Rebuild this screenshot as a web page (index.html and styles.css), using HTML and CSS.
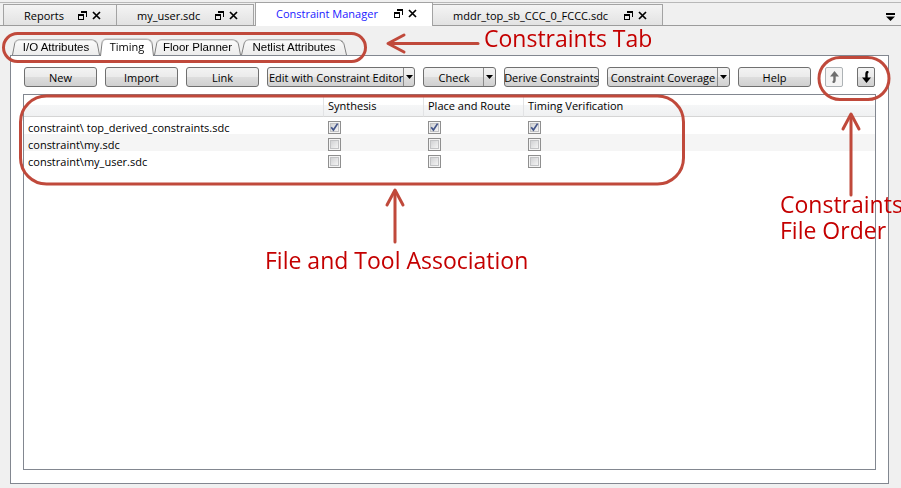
FILE: index.html
```html
<!DOCTYPE html>
<html>
<head>
<meta charset="utf-8">
<title>Constraint Manager</title>
<link rel="stylesheet" href="styles.css">
</head>
<body>
<svg class="defs" width="0" height="0">
  <defs>
    <linearGradient id="cbfill" x1="0" y1="0" x2="1" y2="1">
      <stop offset="0" stop-color="#cfd0d2"/>
      <stop offset="1" stop-color="#f6f6f6"/>
    </linearGradient>
  </defs>
</svg>

<div class="doctabs">
  <div class="dtab dtab-first w-reports"><span class="dlabel">Reports</span><span class="dicons"><svg class="ico-restore" width="9" height="9" viewBox="0 0 9 9"><path d="M3 0.5h5.5v5.5" fill="none" stroke="#000" stroke-width="1"/><rect x="3" y="0" width="6" height="2" fill="#000"/><rect x="0.5" y="3.5" width="5" height="5" fill="none" stroke="#000"/><rect x="0" y="3" width="6" height="2" fill="#000"/></svg><svg class="ico-close" width="9" height="9" viewBox="0 0 9 9"><path d="M1 1L8 8M8 1L1 8" stroke="#000" stroke-width="1.7"/></svg></span></div>
  <div class="dtab w-user"><span class="dlabel">my_user.sdc</span><span class="dicons"><svg class="ico-restore" width="9" height="9" viewBox="0 0 9 9"><path d="M3 0.5h5.5v5.5" fill="none" stroke="#000" stroke-width="1"/><rect x="3" y="0" width="6" height="2" fill="#000"/><rect x="0.5" y="3.5" width="5" height="5" fill="none" stroke="#000"/><rect x="0" y="3" width="6" height="2" fill="#000"/></svg><svg class="ico-close" width="9" height="9" viewBox="0 0 9 9"><path d="M1 1L8 8M8 1L1 8" stroke="#000" stroke-width="1.7"/></svg></span></div>
  <div class="dtab dtab-active w-cm"><span class="dlabel">Constraint Manager</span><span class="dicons"><svg class="ico-restore" width="9" height="9" viewBox="0 0 9 9"><path d="M3 0.5h5.5v5.5" fill="none" stroke="#000" stroke-width="1"/><rect x="3" y="0" width="6" height="2" fill="#000"/><rect x="0.5" y="3.5" width="5" height="5" fill="none" stroke="#000"/><rect x="0" y="3" width="6" height="2" fill="#000"/></svg><svg class="ico-close" width="9" height="9" viewBox="0 0 9 9"><path d="M1 1L8 8M8 1L1 8" stroke="#000" stroke-width="1.7"/></svg></span></div>
  <div class="dtab w-mddr"><span class="dlabel">mddr_top_sb_CCC_0_FCCC.sdc</span><span class="dicons"><svg class="ico-restore" width="9" height="9" viewBox="0 0 9 9"><path d="M3 0.5h5.5v5.5" fill="none" stroke="#000" stroke-width="1"/><rect x="3" y="0" width="6" height="2" fill="#000"/><rect x="0.5" y="3.5" width="5" height="5" fill="none" stroke="#000"/><rect x="0" y="3" width="6" height="2" fill="#000"/></svg><svg class="ico-close" width="9" height="9" viewBox="0 0 9 9"><path d="M1 1L8 8M8 1L1 8" stroke="#000" stroke-width="1.7"/></svg></span></div>
  <svg class="ico-menu" width="9" height="8" viewBox="0 0 9 8"><rect x="0" y="0" width="9" height="2" fill="#000"/><path d="M0 3.5H9L4.5 8Z" fill="#000"/></svg>
</div>

<div class="subtabs">
  <div class="stab w-io"><span>I/O Attributes</span></div>
  <div class="stab stab-active w-timing"><span>Timing</span></div>
  <div class="stab w-floor"><span>Floor Planner</span></div>
  <div class="stab w-netlist"><span>Netlist Attributes</span></div>
</div>

<div class="panel">
  <div class="toolbar">
    <button class="btn w73">New</button>
    <button class="btn w73">Import</button>
    <button class="btn w73">Link</button>
    <div class="combo w148"><span class="combo-main">Edit with Constraint Editor</span><span class="combo-drop"><svg width="7" height="4" viewBox="0 0 7 4"><path d="M0 0H7L3.5 4Z" fill="#000"/></svg></span></div>
    <div class="combo w73"><span class="combo-main">Check</span><span class="combo-drop"><svg width="7" height="4" viewBox="0 0 7 4"><path d="M0 0H7L3.5 4Z" fill="#000"/></svg></span></div>
    <button class="btn w95">Derive Constraints</button>
    <div class="combo w123"><span class="combo-main">Constraint Coverage</span><span class="combo-drop"><svg width="7" height="4" viewBox="0 0 7 4"><path d="M0 0H7L3.5 4Z" fill="#000"/></svg></span></div>
    <button class="btn w73">Help</button>
    <button class="abtn abtn-disabled up"><svg width="9" height="12" viewBox="0 0 9 12"><path d="M4.5 0L9 5.5H0Z" fill="#6e6e6e"/><path d="M4.5 5V9.2Q4.5 11 2.6 11.2" fill="none" stroke="#6e6e6e" stroke-width="2.4"/></svg></button>
    <button class="abtn"><svg width="9" height="12" viewBox="0 0 9 12"><path d="M4.5 12L9 6.5H0Z" fill="#000"/><path d="M4.5 7V2.8Q4.5 1 6.4 0.8" fill="none" stroke="#000" stroke-width="2.4"/></svg></button>
  </div>

  <div class="listbox">
    <div class="grid">
      <div class="hcell"></div>
      <div class="hcell">Synthesis</div>
      <div class="hcell">Place and Route</div>
      <div class="hcell hcell-last">Timing Verification</div>

      <div class="cell">constraint\ top_derived_constraints.sdc</div>
      <div class="cell"><svg class="cb" width="13" height="13" viewBox="0 0 13 13"><rect x="0.5" y="0.5" width="12" height="12" fill="#f4f4f4" stroke="#8f8f8f"/><rect x="2.5" y="2.5" width="8" height="8" fill="url(#cbfill)" stroke="#c2c3c5"/><path d="M3.2 6.2L5.4 9L9.6 2.6" fill="none" stroke="#43558a" stroke-width="1.7"/></svg></div>
      <div class="cell"><svg class="cb" width="13" height="13" viewBox="0 0 13 13"><rect x="0.5" y="0.5" width="12" height="12" fill="#f4f4f4" stroke="#8f8f8f"/><rect x="2.5" y="2.5" width="8" height="8" fill="url(#cbfill)" stroke="#c2c3c5"/><path d="M3.2 6.2L5.4 9L9.6 2.6" fill="none" stroke="#43558a" stroke-width="1.7"/></svg></div>
      <div class="cell cell-last"><svg class="cb" width="13" height="13" viewBox="0 0 13 13"><rect x="0.5" y="0.5" width="12" height="12" fill="#f4f4f4" stroke="#8f8f8f"/><rect x="2.5" y="2.5" width="8" height="8" fill="url(#cbfill)" stroke="#c2c3c5"/><path d="M3.2 6.2L5.4 9L9.6 2.6" fill="none" stroke="#43558a" stroke-width="1.7"/></svg></div>

      <div class="cell alt">constraint\my.sdc</div>
      <div class="cell alt"><svg class="cb" width="13" height="13" viewBox="0 0 13 13"><rect x="0.5" y="0.5" width="12" height="12" fill="#f4f4f4" stroke="#8f8f8f"/><rect x="2.5" y="2.5" width="8" height="8" fill="url(#cbfill)" stroke="#c2c3c5"/></svg></div>
      <div class="cell alt"><svg class="cb" width="13" height="13" viewBox="0 0 13 13"><rect x="0.5" y="0.5" width="12" height="12" fill="#f4f4f4" stroke="#8f8f8f"/><rect x="2.5" y="2.5" width="8" height="8" fill="url(#cbfill)" stroke="#c2c3c5"/></svg></div>
      <div class="cell alt cell-last"><svg class="cb" width="13" height="13" viewBox="0 0 13 13"><rect x="0.5" y="0.5" width="12" height="12" fill="#f4f4f4" stroke="#8f8f8f"/><rect x="2.5" y="2.5" width="8" height="8" fill="url(#cbfill)" stroke="#c2c3c5"/></svg></div>

      <div class="cell">constraint\my_user.sdc</div>
      <div class="cell"><svg class="cb" width="13" height="13" viewBox="0 0 13 13"><rect x="0.5" y="0.5" width="12" height="12" fill="#f4f4f4" stroke="#8f8f8f"/><rect x="2.5" y="2.5" width="8" height="8" fill="url(#cbfill)" stroke="#c2c3c5"/></svg></div>
      <div class="cell"><svg class="cb" width="13" height="13" viewBox="0 0 13 13"><rect x="0.5" y="0.5" width="12" height="12" fill="#f4f4f4" stroke="#8f8f8f"/><rect x="2.5" y="2.5" width="8" height="8" fill="url(#cbfill)" stroke="#c2c3c5"/></svg></div>
      <div class="cell cell-last"><svg class="cb" width="13" height="13" viewBox="0 0 13 13"><rect x="0.5" y="0.5" width="12" height="12" fill="#f4f4f4" stroke="#8f8f8f"/><rect x="2.5" y="2.5" width="8" height="8" fill="url(#cbfill)" stroke="#c2c3c5"/></svg></div>
    </div>
  </div>
</div>

<svg class="annot" width="901" height="488" viewBox="0 0 901 488">
  <g fill="none" stroke="#c0493b" stroke-width="3" stroke-linecap="round" stroke-linejoin="round">
    <rect x="3.5" y="31.5" width="362" height="28" rx="14"/>
    <line x1="478" y1="41.5" x2="390" y2="41.5"/>
    <polyline points="404,33 388,41.5 404,50"/>
    <rect x="20.5" y="94" width="663" height="88" rx="26"/>
    <line x1="395" y1="240" x2="395" y2="190"/>
    <polyline points="387,203 395,188 403,203"/>
    <rect x="819" y="55.5" width="70" height="42" rx="21"/>
    <line x1="851" y1="193" x2="851" y2="114"/>
    <polyline points="843,127 851,112 859,127"/>
  </g>
</svg>
<div class="note note-tab">Constraints Tab</div>
<div class="note note-file">File and Tool Association</div>
<div class="note note-order"><div class="note-line">Constraints</div><div class="note-line">File Order</div></div>
</body>
</html>
```

FILE: styles.css
```css
html, body {
  margin: 0;
  padding: 0;
}
body {
  width: 901px;
  height: 488px;
  overflow: hidden;
  position: relative;
  background: #f0f0f0;
  font-family: "Open Sans", "Noto Sans", sans-serif;
  font-size: 11px;
  color: #000;
  border-top: 2px solid #f0f0f0;
  box-sizing: border-box;
}
.defs {
  position: absolute;
  width: 0;
  height: 0;
}

/* document tabs */
.doctabs {
  display: flex;
  align-items: flex-end;
  height: 24px;
  box-sizing: border-box;
  border-top: 1px solid #b8b8b8;
  border-bottom: 1px solid #9c9c9c;
  padding-left: 3px;
}
.dtab {
  height: 21px;
  box-sizing: border-box;
  display: flex;
  align-items: center;
  padding: 1px 15px 0 20px;
  border-top: 1px solid #a3a3a3;
  border-right: 1px solid #a3a3a3;
  background: linear-gradient(#f4f4f4, #e2e2e2);
  white-space: nowrap;
}
.dtab-first {
  border-left: 1px solid #a3a3a3;
}
.dtab-active {
  height: 24px;
  margin-bottom: -1px;
  margin-left: 1px;
  background: #fff;
  color: #1a1aff;
  border-left: 1px solid #a3a3a3;
  padding-top: 0;
  padding-bottom: 2px;
}
.dlabel {
  flex: 1;
}
.dicons {
  display: flex;
  align-items: center;
  gap: 5px;
}
.w-reports { width: 114px; }
.w-user { width: 137px; }
.w-cm { width: 178px; }
.w-mddr { width: 230px; }
.ico-menu {
  margin-left: auto;
  margin-right: 6px;
  align-self: center;
  margin-top: 5px;
}

/* sub tabs */
.subtabs {
  display: flex;
  align-items: flex-end;
  height: 29px;
  padding-left: 12px;
  position: relative;
  z-index: 2;
}
.stab {
  position: relative;
  height: 17px;
  display: flex;
  align-items: center;
  justify-content: center;
  font-family: "Liberation Sans", Arial, sans-serif;
  font-size: 11.5px;
  padding-top: 1px;
  box-sizing: border-box;
}
.stab::before {
  content: "";
  position: absolute;
  left: 0;
  right: 0;
  top: 0;
  bottom: 0;
  border: 1px solid #7c7c7c;
  border-bottom: none;
  border-radius: 5px 6px 0 0;
  background: linear-gradient(#fbfbfb, #ececec);
  transform: perspective(40px) rotateX(10deg);
  transform-origin: bottom;
  z-index: -1;
}
.stab span {
  position: relative;
}
.stab-active {
  height: 19px;
  margin-bottom: -1px;
  font-family: "Open Sans", "Noto Sans", sans-serif;
  font-size: 11px;
  padding-bottom: 1px;
}
.stab-active::before {
  background: #fff;
}
.w-io { width: 88px; }
.w-timing { width: 54px; }
.w-floor { width: 87px; }
.w-netlist { width: 106px; }

/* main panel */
.panel {
  margin-left: 10px;
  width: 879px;
  height: 429px;
  box-sizing: border-box;
  border: 1px solid #828790;
  background: #fff;
  padding: 11px 12px 13px 13px;
  display: flex;
  flex-direction: column;
  position: relative;
  z-index: 1;
}
.toolbar {
  display: flex;
  align-items: flex-start;
  gap: 8px;
  height: 20px;
}
.btn, .combo, .abtn {
  height: 20px;
  box-sizing: border-box;
  border: 1px solid #707070;
  border-radius: 3px;
  background: linear-gradient(#f3f3f3 0%, #ebebeb 48%, #dddddd 52%, #d0d0d0 100%);
  font-family: "Open Sans", "Noto Sans", sans-serif;
  font-size: 11px;
  color: #000;
  padding: 0;
  margin: 0;
  display: flex;
  align-items: center;
  justify-content: center;
  white-space: nowrap;
}
.combo {
  justify-content: flex-start;
}
.combo-main {
  flex: 1;
  text-align: center;
  padding-left: 1px;
}
.combo-drop {
  width: 11px;
  height: 100%;
  border-left: 1px solid #8a8a8a;
  display: flex;
  align-items: center;
  justify-content: center;
}
.w73 { width: 73px; }
.w95 { width: 95px; }
.w123 { width: 123px; }
.w148 { width: 148px; }
.abtn {
  width: 18px;
  border-radius: 2px;
}
.up {
  margin-left: auto;
}
.abtn-disabled {
  border-color: #adb2b5;
  background: #f4f4f4;
}
.abtn + .abtn {
  margin-left: 6px;
  margin-right: 1px;
}

/* list box */
.listbox {
  margin-top: 7px;
  margin-left: -1px;
  flex: 1;
  border: 1px solid #828790;
  background: #fff;
}
.grid {
  display: grid;
  grid-template-columns: 300px 100px 100px 1fr;
  grid-template-rows: 22px;
  grid-auto-rows: 17px;
}
.hcell {
  height: 22px;
  box-sizing: border-box;
  background: linear-gradient(#ffffff 0%, #ffffff 45%, #f5f6f7 50%, #f0f1f2 100%);
  border-right: 1px solid #e2e3e5;
  border-bottom: 1px solid #d5d5d5;
  padding: 3px 0 0 4px;
  white-space: nowrap;
}
.hcell-last {
  border-right: none;
}
.cell {
  height: 17px;
  box-sizing: border-box;
  padding: 3px 0 0 4px;
  display: flex;
  align-items: center;
  white-space: nowrap;
}
.alt {
  background: #f5f5f5;
}
.cb {
  display: block;
}

/* annotations (overlay) */
.annot {
  position: absolute;
  left: 0;
  top: 0;
  z-index: 10;
  pointer-events: none;
}
.note {
  position: absolute;
  z-index: 11;
  color: #c40000;
  font-family: "Open Sans", "Noto Sans", sans-serif;
  font-size: 23px;
  line-height: 26px;
  white-space: nowrap;
}
.note-tab {
  left: 484px;
  top: 23px;
}
.note-file {
  left: 265px;
  top: 245px;
}
.note-order {
  left: 780px;
  top: 189px;
}
.note-line {
  height: 26px;
}
```
